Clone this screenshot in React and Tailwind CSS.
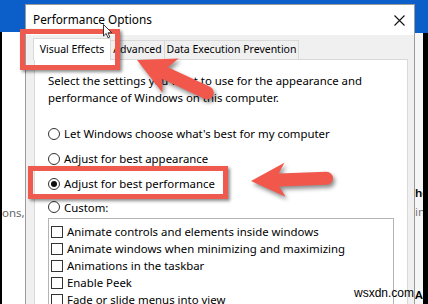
import React from "react"

const RADIOS = [
  { label: "Let Windows choose what's best for my computer", h: "h-[25px]" },
  { label: "Adjust for best appearance", h: "h-[25px]" },
  { label: "Adjust for best performance", h: "h-[25px]", checked: true },
  { label: "Custom:", h: "h-[22px]" },
]

const CHECKS = [
  "Animate controls and elements inside windows",
  "Animate windows when minimizing and maximizing",
  "Animations in the taskbar",
  "Enable Peek",
  "Fade or slide menus into view",
]

function Arrow({ x, y, angle, length, head = 34, half = 17 }) {
  const L = length
  const d = `M0,0 L${head},-${half} L${head - 6},-6.5 L${L - 6.5},-6.5 A6.5,6.5 0 0 1 ${L - 6.5},6.5 L${head - 6},6.5 L${head},${half} Z`
  return <path d={d} transform={`translate(${x},${y}) rotate(${angle})`} fill="#f1584b" />
}

export default function App() {
  return (
    <div className="relative w-[428px] h-[304px] overflow-hidden bg-white text-black font-['Noto_Sans',sans-serif]">
      <div className="h-[4px] bg-[#0c5fc8]" />
      <div className="flex h-[300px] overflow-hidden">
        {/* left of the dialog */}
        <div className="w-[25px] shrink-0 flex flex-col">
          <div className="h-[28px] shrink-0 bg-[#0c5fc8]" />
          <div className="flex-1 border-l-[2px] border-black bg-white">
            <div className="mt-[172px] text-right pr-[4px] text-[11.5px] leading-[17px] text-[#666]">ons,</div>
          </div>
        </div>

        {/* dialog */}
        <div className="w-[390px] shrink-0 min-h-0 flex flex-col border border-b-0 border-[#9b9b9b] bg-[#f0f0f0]">
          <div className="h-[30px] shrink-0 bg-white flex items-center justify-between pl-[7px] pr-[9px]">
            <span className="text-[11.8px] leading-none">Performance Options</span>
            <svg width="11" height="11" viewBox="0 0 11 11">
              <path d="M0.5 0.5 L10.5 10.5 M10.5 0.5 L0.5 10.5" stroke="#111" strokeWidth="1.1" />
            </svg>
          </div>

          <div className="flex-1 min-h-0 flex flex-col pl-[8px] pr-[6px]">
            <div className="h-[24px] shrink-0 flex items-end text-[10.5px] whitespace-nowrap">
              <div className="relative z-10 -ml-[1px] -mb-[1px] w-[78px] h-[22px] bg-white border border-b-0 border-[#d9d9d9] flex items-center justify-center">
                Visual Effects
              </div>
              <div className="w-[54px] h-[19px] border border-l-0 border-b-0 border-[#d9d9d9] flex items-center justify-center">
                Advanced
              </div>
              <div className="w-[134px] h-[19px] border border-l-0 border-b-0 border-[#d9d9d9] flex items-center justify-center">
                Data Execution Prevention
              </div>
            </div>

            <div className="flex-1 min-h-0 overflow-hidden bg-white border border-b-0 border-[#d9d9d9] pt-[12px] pl-[13px] text-[11.4px] leading-[17px] whitespace-nowrap">
              <p>Select the settings you want to use for the appearance and</p>
              <p>performance of Windows on this computer.</p>

              <div className="mt-[15px]">
                {RADIOS.map((r) => (
                  <div key={r.label} className={`${r.h} flex items-center gap-[4px]`}>
                    <span className="w-[12px] h-[12px] rounded-full border border-[#333] flex items-center justify-center bg-white">
                      {r.checked && <span className="w-[6px] h-[6px] rounded-full bg-[#111]" />}
                    </span>
                    <span>{r.label}</span>
                  </div>
                ))}
              </div>

              <div className="w-[346px] border border-b-0 border-[#b4b4b4] pt-[4px] pl-[2px]">
                {CHECKS.map((c) => (
                  <div key={c} className="h-[17px] flex items-center gap-[4px]">
                    <span className="w-[12px] h-[12px] border border-[#333] bg-white" />
                    <span>{c}</span>
                  </div>
                ))}
              </div>
            </div>
          </div>
        </div>

        {/* right of the dialog */}
        <div className="flex-1 flex flex-col">
          <div className="h-[29px] shrink-0 bg-[#0c5fc8]" />
          <div className="flex-1 flex">
            <div className="w-[8px] bg-[#f6f6f6] overflow-hidden text-[11.5px] leading-[17px] whitespace-nowrap">
              <div className="mt-[151px] font-semibold">ho</div>
              <div className="mt-[2px] text-[#777]">inl</div>
              <div className="mt-[66px] font-semibold">Ap</div>
            </div>
            <div className="flex-1 bg-black" />
          </div>
        </div>
      </div>

      {/* annotations */}
      <div className="absolute left-[20px] top-[29px] w-[100px] h-[41px] border-[5px] border-[#ef5a4e] shadow-[2px_2px_3px_rgba(0,0,0,0.45)]" />
      <div className="absolute left-[28px] top-[166px] w-[200px] h-[33px] border-[5px] border-[#ef5a4e] shadow-[2px_2px_3px_rgba(0,0,0,0.45)]" />

      <svg className="absolute left-0 top-0 drop-shadow-[2px_3px_2px_rgba(0,0,0,0.45)]" width="428" height="304" viewBox="0 0 428 304">
        <Arrow x={137} y={60} angle={25} length={84} head={37} half={19} />
        <Arrow x={251} y={181} angle={-2} length={82} />
      </svg>

      <svg className="absolute left-[103px] top-[24px]" width="10" height="15" viewBox="0 0 10 15">
        <path d="M0.5 0.5 L0.5 12 L3.2 9.5 L5 13.8 L6.8 13 L5 8.8 L8.8 8.8 Z" fill="#fff" stroke="#222" strokeWidth="0.9" />
      </svg>

      <div className="absolute left-[354px] top-[285px] text-[12px] leading-[16px] font-['Liberation_Sans',sans-serif] text-black">
        wsxdn.com
      </div>
    </div>
  )
}
